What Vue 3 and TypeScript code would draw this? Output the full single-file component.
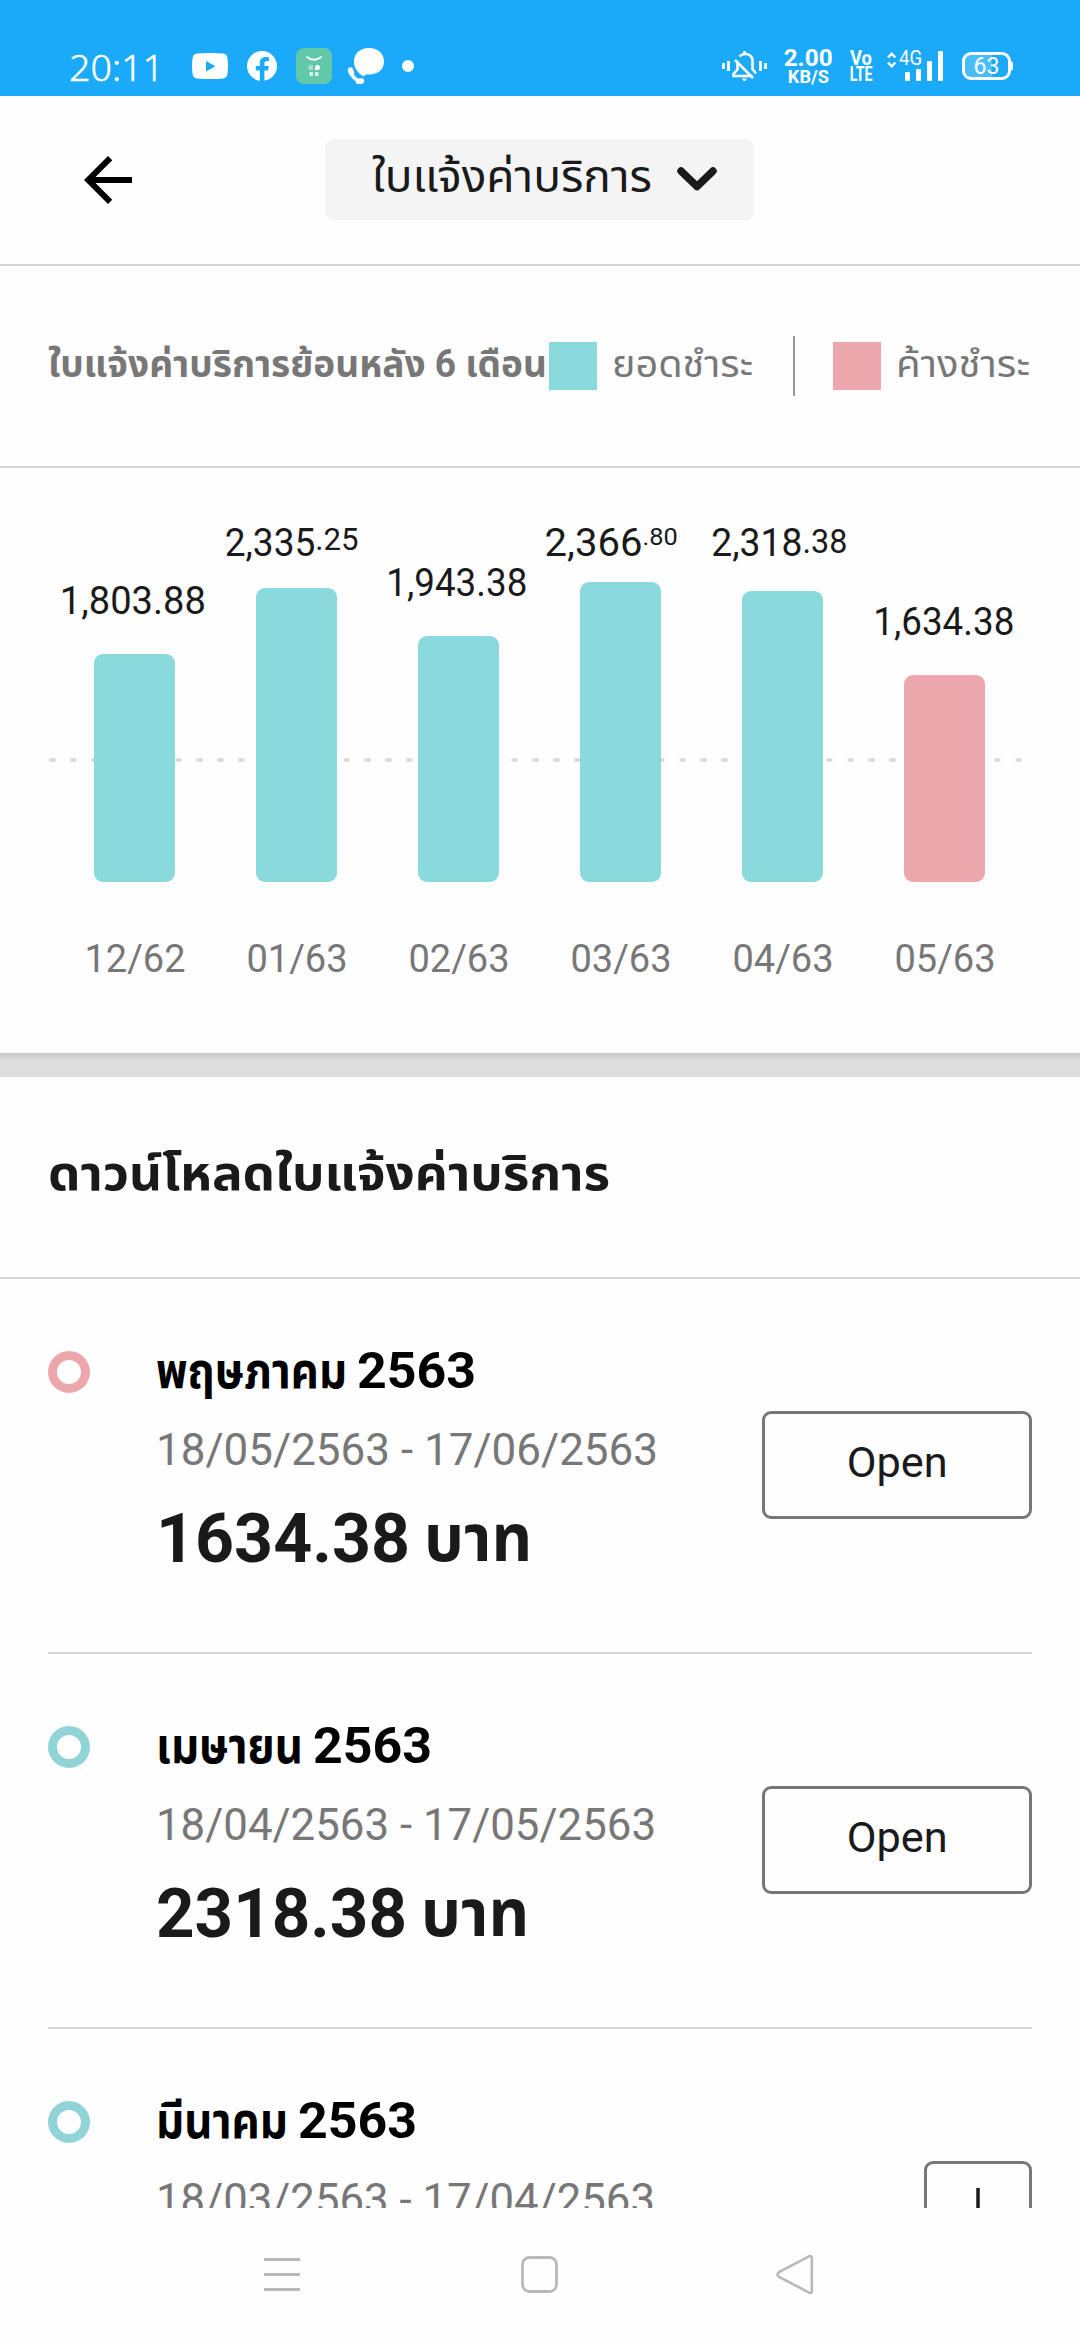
<script setup lang="ts">
import type { Directive } from 'vue'

interface Bar {
  month: string
  whole: string
  decimal: string
  decimalSize: number
  decimalLift: number
  width: number
  shift: number
  gap: number
  height: number
  due?: boolean
}

interface Bill {
  month: string
  monthWidth: number
  monthSlot: number
  year: string
  period: string
  periodWidth: number
  amount: string
  amountWidth: number
  due?: boolean
  opened?: boolean
}

const bars: Bar[] = [
  { month: '12/62', whole: '1,803', decimal: '.88', decimalSize: 38, decimalLift: 0, width: 146, shift: -1, gap: 29, height: 228 },
  { month: '01/63', whole: '2,335', decimal: '.25', decimalSize: 32, decimalLift: 6, width: 134, shift: -4, gap: 21, height: 294 },
  { month: '02/63', whole: '1,943', decimal: '.38', decimalSize: 38, decimalLift: 0, width: 141, shift: -1, gap: 29, height: 246 },
  { month: '03/63', whole: '2,366', decimal: '.80', decimalSize: 24, decimalLift: 11, width: 133, shift: -9, gap: 15, height: 300 },
  { month: '04/63', whole: '2,318', decimal: '.38', decimalSize: 33, decimalLift: 3, width: 136, shift: -3, gap: 24, height: 291 },
  { month: '05/63', whole: '1,634', decimal: '.38', decimalSize: 38, decimalLift: 0, width: 141, shift: 0, gap: 29, height: 207, due: true },
]

const bills: Bill[] = [
  { month: 'พฤษภาคม', monthWidth: 191, monthSlot: 201, year: '2563', period: '18/05/2563 - 17/06/2563', periodWidth: 502, amount: '1634.38', amountWidth: 254, due: true, opened: true },
  { month: 'เมษายน', monthWidth: 147, monthSlot: 157, year: '2563', period: '18/04/2563 - 17/05/2563', periodWidth: 500, amount: '2318.38', amountWidth: 251, opened: true },
  { month: 'มีนาคม', monthWidth: 132, monthSlot: 142, year: '2563', period: '18/03/2563 - 17/04/2563', periodWidth: 499, amount: '2366.80', amountWidth: 251 },
]

// Stretches a line of text horizontally so it fills the given width.
const vFit: Directive<HTMLElement, number> = {
  mounted(el, { value }) {
    el.style.transform = `scaleX(${value / el.getBoundingClientRect().width})`
  },
}
</script>

<template>
  <div class="screen">
    <div class="status">
      <div class="clock-slot"><span v-fit="95" class="clock">20:11</span></div>
      <svg class="s-left" width="222" height="36" viewBox="192 48 222 36">
        <path fill="#fff" d="M197 53.600q13-1.400 26 0q4 .4 4.400 4.400q1.200 8 0 16q-.4 4-4.400 4.400q-13 1.400-26 0q-4-.4-4.400-4.400q-1.200-8 0-16q.4-4 4.400-4.400zM206 61v10.500l9.500-5.200z" fill-rule="evenodd" />
        <circle cx="262" cy="66" r="15" fill="#fff" />
        <path fill="#1baaf9" d="M259.800 82V70.500h-4v-4.400h4v-3c0-4 2.300-6.100 6-6.100 1.600 0 3.200.3 3.200.3v3.700h-1.900c-1.900 0-2.700 1.200-2.700 2.500v2.600h4.400l-.7 4.400h-3.700V82z" />
        <rect x="296" y="48" width="36" height="36" rx="8" fill="#62c8aa" />
        <path d="M307 57q7 5.600 14 0" fill="none" stroke="#fff" stroke-width="2" stroke-linecap="round" />
        <path fill="#a5dfce" d="M310.500 65h2.500v5h-2.500a2.500 2.500 0 0 1 0-5z" />
        <path fill="#fff" d="M315 70v-2.500a2.500 2.500 0 1 1 2.500 2.500z" />
        <path fill="#dff5ee" d="M313 72v4h-2.500a2.300 2.300 0 0 1 0-4zM315 72h2.500a2.300 2.300 0 0 1 0 4H315z" />
        <path fill="#fff" d="M369 48c9 0 15 5.500 15 13.500S378 74.500 369 74.500h-3l-2.500 2c-5-3-9.500-8-9.500-14.500C354 53.500 360 48 369 48z" />
        <path d="M350 70.500q2.800 9 11.500 11.500" fill="none" stroke="#fff" stroke-width="3.600" />
        <path d="M350.500 70l1 3M358.500 81.500l3-.5" stroke="#fff" stroke-width="5.500" stroke-linecap="round" />
        <circle cx="408" cy="66" r="6" fill="#fff" />
      </svg>
      <span class="spacer"></span>
      <svg class="s-bell" width="46" height="32" viewBox="722 50 46 32" fill="none" stroke="#fff" stroke-width="2.600">
        <path d="M723.500 63v6M728.500 61v10M760.500 61v10M765.500 63v6" stroke-width="2.800" />
        <path d="M737.500 63v6.500l-4 4.500v2h19M739.500 56.500c3-3.500 11-4 13 3v9.500l3.500 4.500M744.500 51v4M735 60l18 18" />
        <path d="M742 78.500h5l-1.500 2.500h-2z" fill="#fff" stroke="none" />
      </svg>
      <div class="speed"><b v-fit="49">2.00</b><b v-fit="41" class="unit">KB/S</b></div>
      <div class="volte"><b v-fit="22">Vo</b><b v-fit="23">LTE</b></div>
      <div class="signal">
        <svg width="58" height="32" viewBox="885 50 58 32" fill="#fff">
          <path d="M887 57.500l3.700-3.700 3.700 3.700M887 62.500l3.700 3.700 3.700-3.700" fill="none" stroke="#fff" stroke-width="2.400" />
          <rect x="904" y="72" width="5" height="9" rx="1" />
          <rect x="915" y="69" width="5" height="12" rx="1" />
          <rect x="926" y="61" width="5" height="20" rx="1" />
          <rect x="937" y="51" width="5" height="30" rx="1" />
        </svg>
        <span v-fit="23" class="gen">4G</span>
      </div>
      <div class="battery"><span v-fit="26">63</span></div>
    </div>

    <header class="header">
      <svg class="back" width="72" height="72" viewBox="0 0 24 24">
        <path d="M20 11H7.830l5.590-5.590L12 4l-8 8 8 8 1.410-1.410L7.830 13H20v-2z" />
      </svg>
      <div class="picker">
        <span class="picker-slot"><span v-fit="280" class="picker-text">ใบแจ้งค่าบริการ</span></span>
        <svg width="40" height="25" viewBox="0 0 40 25">
          <path d="M4 4l16 15.500L36 4" fill="none" stroke="#1a1a1a" stroke-width="7.500" stroke-linecap="round" stroke-linejoin="round" />
        </svg>
      </div>
    </header>

    <section class="legend">
      <span class="slot slot-title"><span v-fit="499" class="fit legend-title">ใบแจ้งค่าบริการย้อนหลัง 6 เดือน</span></span>
      <i class="swatch"></i>
      <span class="slot slot-paid"><span v-fit="141" class="fit legend-name">ยอดชำระ</span></span>
      <i class="rule"></i>
      <i class="swatch due"></i>
      <span class="slot slot-due"><span v-fit="134" class="fit legend-name">ค้างชำระ</span></span>
    </section>

    <section class="chart">
      <div class="plot">
        <svg class="guide" width="984" height="4" viewBox="0 0 984 4">
          <path d="M1.500 2H976" stroke="#d8d8d8" stroke-width="3.500" stroke-dasharray="6 15" />
        </svg>
        <div v-for="bar in bars" :key="bar.month" class="column">
          <div class="value-slot" :style="{ marginBottom: bar.gap + 'px', marginLeft: bar.shift * 2 + 'px' }">
            <span v-fit="bar.width" class="value">{{ bar.whole }}<span class="decimal" :style="{ fontSize: bar.decimalSize + 'px', verticalAlign: bar.decimalLift + 'px' }">{{ bar.decimal }}</span></span>
          </div>
          <div class="bar" :class="{ due: bar.due }" :style="{ height: bar.height + 'px' }"></div>
        </div>
      </div>
      <div class="months">
        <span v-for="bar in bars" :key="bar.month" class="month">{{ bar.month }}</span>
      </div>
    </section>

    <div class="band"></div>

    <section class="download">
      <h2 v-fit="562">ดาวน์โหลดใบแจ้งค่าบริการ</h2>
    </section>

    <main class="bills">
      <article v-for="bill in bills" :key="bill.month" class="bill">
        <i class="ring" :class="{ due: bill.due }"></i>
        <div class="info">
          <div class="line title">
            <span class="part" :style="{ width: bill.monthSlot + 'px' }"><span v-fit="bill.monthWidth" class="fit">{{ bill.month }}</span></span>
            <span v-fit="119" class="fit">{{ bill.year }}</span>
          </div>
          <div v-fit="bill.periodWidth" class="fit period">{{ bill.period }}</div>
          <div class="line amount">
            <span class="part" :style="{ width: bill.amountWidth + 14 + 'px' }"><span v-fit="bill.amountWidth" class="fit">{{ bill.amount }}</span></span>
            <span v-fit="108" class="fit baht">บาท</span>
          </div>
        </div>
        <button v-if="bill.opened" class="open"><span v-fit="101">Open</span></button>
        <button v-else class="open get">
          <svg width="36" height="54" viewBox="0 0 36 54" fill="none" stroke="#1a1a1a" stroke-width="3.500">
            <path d="M18 0v38M6 27l12 12 12-12M2 50h32" />
          </svg>
        </button>
      </article>
    </main>

    <nav class="nav">
      <svg width="36" height="33" viewBox="0 0 36 33"><path d="M0 1.500h36M0 16.500h36M0 31.500h36" stroke="#b9b9b9" stroke-width="2.800" /></svg>
      <svg width="37" height="37" viewBox="0 0 37 37"><rect x="1.500" y="1.500" width="34" height="34" rx="7" fill="none" stroke="#b9b9b9" stroke-width="2.800" /></svg>
      <svg width="38" height="41" viewBox="0 0 38 41"><path d="M33.500 2.200L3 18.200q-3 2.300 0 4.600l30.500 16q2.300.8 2.300-1.600V3.800q0-2.400-2.300-1.600z" fill="none" stroke="#b9b9b9" stroke-width="2.600" /></svg>
    </nav>
  </div>
</template>

<style>
body {
  margin: 0;
  background: #fefefe;
}
</style>

<style scoped>
.screen {
  width: 1080px;
  height: 2340px;
  overflow: hidden;
  display: flex;
  flex-direction: column;
  background: #fefefe;
  color: #1a1a1a;
  font-family: Roboto, "Noto Sans Thai", "Noto Sans", sans-serif;
}
.screen > * {
  flex: none;
  box-sizing: border-box;
}
svg {
  display: block;
  flex: none;
}
.status {
  height: 96px;
  padding: 48px 69px 0 69px;
  display: flex;
  align-items: flex-start;
  background: #1baaf9;
  color: #fff;
}
.clock-slot {
  width: 123px;
  display: flex;
}
.clock {
  font: 300 37px/38px "Noto Sans", sans-serif;
  -webkit-text-stroke: 0.4px #fff;
  transform-origin: left;
}
.spacer {
  flex: 1;
}
.s-bell {
  margin: 2px 16px 0 0;
}
.speed,
.volte {
  display: flex;
  flex-direction: column;
  align-items: center;
}
.speed {
  width: 49px;
  margin-right: 17px;
}
.speed b {
  font-size: 24px;
  line-height: 20px;
}
.speed .unit {
  font-size: 18px;
  line-height: 18px;
}
.volte {
  width: 22px;
  margin: 2px 14px 0 0;
}
.volte b {
  font-size: 20px;
  line-height: 16px;
}
.signal {
  position: relative;
  margin: 2px 18px 0 0;
}
.gen {
  position: absolute;
  left: 13px;
  top: 0;
  font-size: 21px;
  line-height: 17px;
  transform-origin: left;
}
.battery {
  position: relative;
  box-sizing: border-box;
  width: 49px;
  height: 28px;
  margin-top: 4px;
  border: 3px solid #fff;
  border-radius: 9px;
  display: flex;
  align-items: center;
  justify-content: center;
  background: linear-gradient(90deg, #4bbcfa 62%, transparent 62%);
  font-size: 24px;
  line-height: 22px;
}
.battery::after {
  content: "";
  position: absolute;
  right: -5px;
  top: 6px;
  width: 3px;
  height: 10px;
  border-radius: 0 3px 3px 0;
  background: #fff;
}
.header {
  height: 170px;
  border-bottom: 2px solid #d5d5d5;
  padding-left: 72px;
  display: flex;
}
.back {
  margin-top: 48px;
}
.picker {
  box-sizing: border-box;
  width: 429px;
  height: 81px;
  margin: 43px 0 0 181px;
  padding-left: 47px;
  display: flex;
  align-items: center;
  background: #f4f4f4;
  border-radius: 9px;
}
.picker-slot {
  width: 305px;
}
.picker-text {
  display: inline-block;
  white-space: nowrap;
  font-size: 44px;
  line-height: 77px;
  height: 81px;
  transform-origin: left;
}
.legend {
  height: 202px;
  border-bottom: 2px solid #d5d5d5;
  padding-left: 48px;
  display: flex;
  align-items: center;
  color: #777;
}
.slot {
  height: 48px;
}
.slot-title {
  width: 501px;
}
.slot-paid {
  width: 181px;
  margin-left: 15px;
}
.slot-due {
  margin-left: 15px;
}
.fit {
  width: max-content;
  white-space: nowrap;
  transform-origin: left;
}
.legend .fit {
  display: block;
  font-size: 38px;
  line-height: 44px;
}
.legend-title {
  font-weight: 700;
}
.swatch {
  width: 48px;
  height: 48px;
  background: #8adadd;
}
.rule {
  width: 2px;
  height: 60px;
  margin-right: 38px;
  background: #979797;
}
.due {
  background: #eca7ac;
}
.chart {
  height: 585px;
}
.plot {
  position: relative;
  height: 414px;
  padding-left: 53px;
  display: flex;
}
.guide {
  position: absolute;
  left: 48px;
  top: 290px;
}
.column {
  position: relative;
  width: 162px;
  display: flex;
  flex-direction: column;
  justify-content: flex-end;
  align-items: center;
}
.value-slot {
  display: flex;
  justify-content: center;
}
.value {
  font-size: 38px;
  line-height: 48px;
  height: 48px;
  white-space: nowrap;
}
.decimal {
  line-height: 1;
}
.bar {
  width: 81px;
  border-radius: 9px;
  background: #8adadd;
}
.bar.due {
  background: #eca7ac;
}
.months {
  display: flex;
  padding: 53px 0 0 54px;
}
.month {
  width: 162px;
  text-align: center;
  font-size: 38px;
  line-height: 48px;
  color: #777;
}
.band {
  height: 24px;
  background: linear-gradient(#c8c8c8, #ddd 7px);
}
.download {
  height: 202px;
  padding: 59px 0 0 48px;
  border-bottom: 2px solid #d5d5d5;
}
h2 {
  width: max-content;
  margin: 0;
  font-size: 48px;
  line-height: 76px;
  transform-origin: left;
}
.screen > .bills {
  height: 929px;
  overflow: hidden;
  padding: 0 48px;
}
.bill {
  box-sizing: border-box;
  height: 375px;
  border-bottom: 2px solid #d5d5d5;
  display: flex;
  align-items: flex-start;
}
.ring {
  box-sizing: border-box;
  width: 42px;
  height: 42px;
  margin-top: 72px;
  border: 9px solid #90d4d8;
  border-radius: 50%;
}
.ring.due {
  background: none;
  border-color: #eca7ac;
}
.info {
  flex: 1;
  padding: 52px 0 0 66px;
}
.line {
  display: flex;
}
.part {
  display: flex;
  flex: none;
}
.title {
  color: #000;
  font-size: 50px;
  font-weight: 700;
  line-height: 81px;
}
.period {
  color: #777;
  font-size: 44px;
  line-height: 76px;
}
.amount {
  font-size: 69px;
  font-weight: 700;
  line-height: 101px;
}
.baht {
  font-size: 66px;
}
.open {
  box-sizing: border-box;
  width: 270px;
  height: 108px;
  margin: 132px 0 0;
  padding: 0;
  border: 3px solid #777;
  border-radius: 9px;
  background: none;
  color: #1a1a1a;
  font: 400 43px/97px Roboto, sans-serif;
  display: flex;
  justify-content: center;
}
.get {
  width: 108px;
  padding-top: 24px;
}
.nav {
  height: 132px;
  padding-left: 264px;
  display: flex;
  align-items: center;
  background: #fefefe;
}
.nav svg:nth-child(2) {
  margin: 0 218px 0 221px;
}
</style>
